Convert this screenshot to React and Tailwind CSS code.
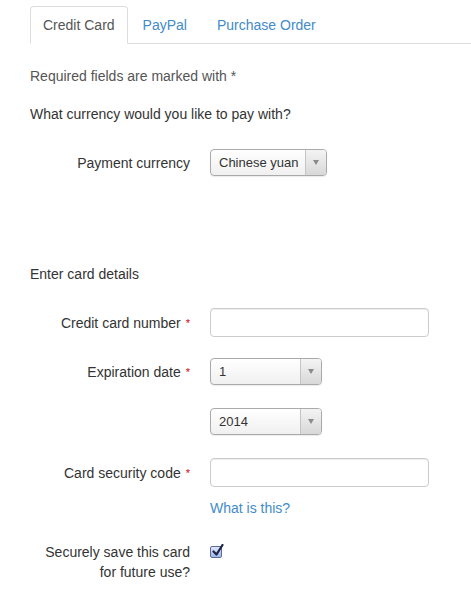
import React, { useState } from 'react';

const font = { fontFamily: '"Liberation Sans", Arial, sans-serif' };

const Select = ({ value, width }) => (
  <div
    className={`flex h-[27px] ${width} rounded-[4px] border border-[#aaa] bg-gradient-to-b from-white to-[#f0f0f0] shadow-[0_1px_1px_rgba(0,0,0,0.08)] overflow-hidden`}
  >
    <div className="flex-1 flex items-center pl-[8px] text-[13px] text-[#333] whitespace-nowrap">{value}</div>
    <div className="w-[21px] shrink-0 flex items-center justify-center border-l border-[#c4c4c4] bg-gradient-to-b from-[#f4f4f4] to-[#d8d8d8]">
      <div className="w-0 h-0 border-l-[3.5px] border-r-[3.5px] border-t-[5px] border-l-transparent border-r-transparent border-t-[#8a8a8a]" />
    </div>
  </div>
);

const Label = ({ children, required }) => (
  <div className="w-[160px] text-right text-[14px] text-[#333] leading-[20px]">
    {children}
    {required && <span className="text-[#d00] text-[11px] align-top ml-[5px]">*</span>}
  </div>
);

const Checkbox = ({ checked, onChange }) => (
  <button onClick={onChange} className="relative mt-[4px] w-[12px] h-[12px] rounded-[2px] border border-[#5b6b9a] bg-gradient-to-b from-[#dfe8fb] to-[#9fb6ec]">
    {checked && (
      <svg className="absolute left-[1px] -top-[3px]" width="12" height="13" viewBox="0 0 12 13">
        <path d="M1.5 7.5 L4.5 10.5 L10.5 1" fill="none" stroke="#1c2545" strokeWidth="2.2" strokeLinecap="round" strokeLinejoin="round" />
      </svg>
    )}
  </button>
);

export default function App() {
  const [tab, setTab] = useState('card');
  const [save, setSave] = useState(true);
  const tabs = [
    { id: 'card', label: 'Credit Card' },
    { id: 'paypal', label: 'PayPal' },
    { id: 'po', label: 'Purchase Order' },
  ];

  return (
    <div className="w-[471px] h-[591px] bg-white overflow-hidden" style={font}>
      <div className="pt-[6px] pl-[30px]">
        <div className="flex border-b border-[#ddd]">
          {tabs.map((t) => (
            <button
              key={t.id}
              onClick={() => setTab(t.id)}
              className={
                tab === t.id
                  ? 'h-[38px] pt-[1px] px-[12px] -mb-px text-[14px] text-[#555] bg-white border border-[#ddd] border-b-white rounded-t-[4px]'
                  : 'h-[37px] pt-[1px] px-[14px] text-[14px] text-[#428bca] border border-transparent'
              }
            >
              {t.label}
            </button>
          ))}
        </div>

        <p className="mt-[22px] text-[14px] text-[#555] leading-[20px]">Required fields are marked with *</p>
        <p className="mt-[18px] text-[14px] text-[#333] leading-[20px]">What currency would you like to pay with?</p>

        <div className="mt-[25px] flex items-center gap-[20px]">
          <Label>Payment currency</Label>
          <Select value="Chinese yuan" width="w-[117px]" />
        </div>

        <p className="mt-[88px] text-[14px] text-[#333] leading-[20px]">Enter card details</p>

        <div className="mt-[24px] flex items-center gap-[20px]">
          <Label required>Credit card number</Label>
          <input className="w-[219px] h-[29px] rounded-[4px] border border-[#ccc] shadow-[inset_0_1px_1px_rgba(0,0,0,0.075)] outline-none px-2 text-[14px]" />
        </div>

        <div className="mt-[21px] flex items-center gap-[20px]">
          <Label required>Expiration date</Label>
          <Select value="1" width="w-[112px]" />
        </div>

        <div className="mt-[23px] flex items-center gap-[20px]">
          <div className="w-[160px]" />
          <Select value="2014" width="w-[112px]" />
        </div>

        <div className="mt-[23px] flex items-center gap-[20px]">
          <Label required>Card security code</Label>
          <input className="w-[219px] h-[29px] rounded-[4px] border border-[#ccc] shadow-[inset_0_1px_1px_rgba(0,0,0,0.075)] outline-none px-2 text-[14px]" />
        </div>

        <div className="mt-[11px] flex gap-[20px]">
          <div className="w-[160px]" />
          <a href="#" className="text-[14px] text-[#428bca] leading-[20px]">What is this?</a>
        </div>

        <div className="mt-[24px] flex items-start gap-[20px]">
          <div className="w-[160px] text-right text-[14px] text-[#333] leading-[20px]">
            Securely save this card
            <br />
            for future use?
          </div>
          <Checkbox checked={save} onChange={() => setSave(!save)} />
        </div>
      </div>
    </div>
  );
}
